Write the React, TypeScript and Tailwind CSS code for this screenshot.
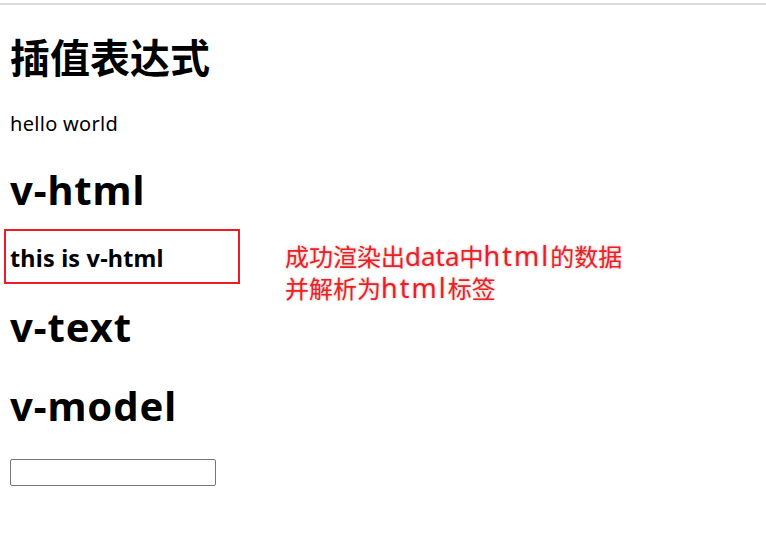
export default function App() {
  return (
    <div className="min-h-[544px] bg-white text-black font-['Noto_Sans','Noto_Sans_CJK_SC',sans-serif]">
      {/* browser edge */}
      <div className="h-[3px]" />
      <div className="h-[2px] bg-[#dcdce0]" />

      <div className="px-[10px] pt-[27px]">
        <h1 className="text-[40px] leading-[52px] font-bold">插值表达式</h1>
        <p className="mt-[27px] text-[20px] leading-[26px] tracking-[0.3px]">hello world</p>

        <h1 className="mt-[27px] text-[40px] leading-[52px] font-bold tracking-[0.9px]">v-html</h1>

        <div className="relative mt-[27px]">
          <h3 className="text-[23.4px] leading-[31px] font-bold tracking-[0.2px]">this is v-html</h3>
          {/* annotation overlay */}
          <div className="absolute -left-[6px] -top-[14px] w-[236px] h-[55px] border-2 border-[#ee1c25]" />
          <div className="absolute left-[275px] -top-[2px] text-[24px] leading-[32px] text-[#f21c24] [text-shadow:0_0_3px_rgba(0,0,0,0.3)] whitespace-nowrap">
            <div className="h-[32px]">
              成功渲染出<span className="text-[26px] leading-none">data</span>中
              <span className="text-[27px] leading-none tracking-[2px]">html</span>的数据
            </div>
            <div className="h-[32px]">
              并解析为<span className="text-[27px] leading-none tracking-[2px]">html</span>标签
            </div>
          </div>
        </div>

        <h1 className="mt-[27px] text-[40px] leading-[52px] font-bold tracking-[0.9px]">v-text</h1>
        <h1 className="mt-[27px] text-[40px] leading-[52px] font-bold tracking-[0.9px]">v-model</h1>

        <input
          type="text"
          className="mt-[27px] block w-[206px] h-[27px] border border-[#767676] rounded-[2px] px-[2px] text-[16px]"
        />
      </div>
    </div>
  );
}
